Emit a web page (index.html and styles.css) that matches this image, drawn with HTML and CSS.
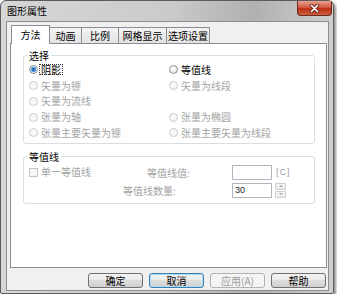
FILE: index.html
```html
<!DOCTYPE html>
<html lang="zh-CN">
<head>
    <meta charset="UTF-8">
    <title>图形属性</title>
    <link rel="stylesheet" href="styles.css">
</head>
<body>
    <div class="window">
        <div class="titlebar">
            <span class="title">图形属性</span>
            <div class="close">
                <svg width="11" height="9" viewBox="0 0 11 9">
                    <path d="M2.5 1.5 L8.5 7.5 M8.5 1.5 L2.5 7.5" stroke="#6a2a1c" stroke-width="3.4" stroke-linecap="round"/>
                    <path d="M2.5 1.5 L8.5 7.5 M8.5 1.5 L2.5 7.5" stroke="#fff" stroke-width="1.7" stroke-linecap="round"/>
                </svg>
            </div>
        </div>

        <div class="client">
            <div class="tabs">
                <div class="tab active w-method">方法</div>
                <div class="tab w-anim">动画</div>
                <div class="tab w-scale">比例</div>
                <div class="tab w-grid">网格显示</div>
                <div class="tab w-opts">选项设置</div>
            </div>

            <div class="panel">
                <fieldset class="group group-select">
                    <legend>选择</legend>
                    <div class="options">
                        <label class="opt on"><span class="radio checked"></span><span class="focus">阴影</span></label>
                        <label class="opt on"><span class="radio"></span>等值线</label>
                        <label class="opt"><span class="radio"></span>矢量为镖</label>
                        <label class="opt"><span class="radio"></span>矢量为线段</label>
                        <label class="opt"><span class="radio"></span>矢量为流线</label>
                        <span></span>
                        <label class="opt"><span class="radio"></span>张量为轴</label>
                        <label class="opt"><span class="radio"></span>张量为椭圆</label>
                        <label class="opt"><span class="radio"></span>张量主要矢量为镖</label>
                        <label class="opt"><span class="radio"></span>张量主要矢量为线段</label>
                    </div>
                </fieldset>

                <fieldset class="group group-contour">
                    <legend>等值线</legend>
                    <div class="row">
                        <label class="opt check-cell"><span class="checkbox"></span>单一等值线</label>
                        <span class="field-label lbl-value">等值线值:</span>
                        <span class="textbox"></span>
                        <span class="unit">[C]</span>
                    </div>
                    <div class="row">
                        <span class="field-label lbl-count">等值线数量:</span>
                        <span class="textbox">30</span>
                        <span class="spin">
                            <span class="spin-btn"><span class="arrow up"></span></span>
                            <span class="spin-btn"><span class="arrow down"></span></span>
                        </span>
                    </div>
                </fieldset>
            </div>

            <div class="buttons">
                <div class="btn">确定</div>
                <div class="btn default">取消</div>
                <div class="btn disabled">应用(A)</div>
                <div class="btn">帮助</div>
            </div>
        </div>
    </div>
</body>
</html>
```

FILE: styles.css
```css
body {
    margin: 0;
    background: #fff;
    font-family: "Noto Sans CJK SC", "Liberation Sans", sans-serif;
    font-size: 10px;
    color: #000;
}

.window {
    box-sizing: border-box;
    width: 334px;
    height: 294px;
    border: 1px solid #5b5b5b;
    border-radius: 6px 6px 2px 2px;
    padding: 0 4px 2px 5px;
    background: linear-gradient(90deg, #d6d6d6, #cbcbcb 50%, #b0b0b0 76%, #c4c4c4 92%, #cfcfcf);
    box-shadow: 2px 2px 3px rgba(0, 0, 0, 0.45);
    display: flex;
    flex-direction: column;
}

/* title bar */
.titlebar {
    height: 20px;
    flex: none;
    display: flex;
    justify-content: space-between;
    align-items: flex-start;
}
.title { line-height: 20px; padding-left: 1px; }
.close {
    box-sizing: border-box;
    width: 35px;
    height: 15px;
    margin-right: -3px;
    border: 1px solid #6d2a1d;
    border-top: none;
    border-radius: 0 0 4px 4px;
    background: linear-gradient(#e6a290, #d25a42 45%, #bb2f15 55%, #cc5e42);
    display: flex;
    align-items: center;
    justify-content: center;
}

.client {
    flex: 1;
    display: flex;
    flex-direction: column;
    background: #f0f0f0;
    border: 1px solid #8d8d8d;
    padding: 0 1px 2px 3px;
}

/* tabs */
.tabs {
    height: 21px;
    flex: none;
    display: flex;
    align-items: flex-end;
    padding-left: 1px;
}
.tab {
    box-sizing: border-box;
    height: 16px;
    line-height: 15px;
    border: 1px solid #898c95;
    border-bottom: none;
    margin-left: -1px;
    background: linear-gradient(#f4f4f4, #e2e2e2);
    text-align: center;
}
.tab.active {
    height: 19px;
    line-height: 17px;
    margin-left: 0;
    margin-bottom: -1px;
    background: #fff;
    position: relative;
    z-index: 1;
}
.w-method { width: 39px; }
.w-anim { width: 33px; }
.w-scale { width: 38px; }
.w-grid { width: 49px; }
.w-opts { width: 44px; }

.panel {
    flex: 1;
    background: #fff;
    border: 1px solid #898c95;
    padding: 6px 11px 0 12px;
    display: flex;
    flex-direction: column;
}

/* group boxes */
.group {
    margin: 0;
    min-width: 0;
    padding: 1px 5px 2px;
    border: 1px solid #d5dfe5;
    border-radius: 3px;
}
.group legend {
    padding: 0 2px;
    margin-left: -2px;
    line-height: 11px;
}
.group-contour {
    margin-top: 7px;
    padding: 3px 5px 5px;
}

.options {
    display: grid;
    grid-template-columns: 140px 1fr;
    grid-auto-rows: 15.75px;
}
.opt {
    display: flex;
    align-items: center;
    gap: 3px;
    line-height: 12px;
    white-space: nowrap;
    color: #a3a3a3;
}
.opt.on { color: #000; }

.radio {
    box-sizing: border-box;
    width: 9px;
    height: 9px;
    flex: none;
    border-radius: 50%;
    border: 1px solid #cacaca;
    background: #f7f7f7;
}
.on .radio {
    border-color: #8e8f8f;
    background: radial-gradient(circle at 40% 35%, #fff, #d9d9d9);
}
.on .radio.checked {
    background: radial-gradient(circle, #1a5ca6 0, #2f7fcf 1.6px, #86bbe6 2.6px, #eef3f8 3.2px);
}
.focus {
    border: 1px dotted #333;
    line-height: 9px;
    padding: 0 1px;
    margin-left: -2px;
}

.checkbox {
    box-sizing: border-box;
    width: 9px;
    height: 9px;
    flex: none;
    border: 1px solid #c5c5c5;
    background: #f7f7f7;
}

.row {
    display: flex;
    align-items: center;
    height: 15px;
}
.row + .row { margin-top: 3px; }
.check-cell { width: 118px; }
.field-label { color: #a3a3a3; white-space: nowrap; }
.lbl-value { width: 85px; }
.lbl-count { width: 109px; margin-left: 94px; }

.textbox {
    box-sizing: border-box;
    width: 40px;
    height: 15px;
    border: 1px solid #b3b7bd;
    background: #fff;
    padding-left: 2px;
    font-family: "Liberation Sans", sans-serif;
    font-size: 9px;
    line-height: 13px;
    color: #222;
}
.unit {
    margin-left: 4px;
    font-family: "Liberation Sans", sans-serif;
    font-size: 9px;
    letter-spacing: 1px;
    color: #a3a3a3;
}

.spin {
    margin-left: 3px;
    width: 11px;
    height: 15px;
    display: flex;
    flex-direction: column;
    gap: 1px;
}
.spin-btn {
    flex: 1;
    border: 1px solid #cfcfcf;
    border-radius: 1px;
    background: linear-gradient(#f8f8f8, #ebebeb);
    display: flex;
    align-items: center;
    justify-content: center;
}
.arrow {
    width: 0;
    height: 0;
    border-left: 2px solid transparent;
    border-right: 2px solid transparent;
}
.arrow.up { border-bottom: 2px solid #a9a9a9; }
.arrow.down { border-top: 2px solid #a9a9a9; }

/* dialog buttons */
.buttons {
    flex: none;
    display: flex;
    justify-content: flex-end;
    gap: 6px;
    margin-top: 5px;
    padding-right: 1px;
}
.btn {
    box-sizing: border-box;
    width: 55px;
    height: 15px;
    border: 1px solid #707070;
    border-radius: 3px;
    background: linear-gradient(#f2f2f2, #ebebeb 45%, #dddddd 50%, #cfcfcf);
    text-align: center;
    line-height: 13px;
}
.btn.default {
    border-color: #3c7fb1;
    box-shadow: inset 0 0 0 1px #a6dcf7;
}
.btn.disabled {
    border-color: #adb2b5;
    background: #f4f4f4;
    color: #9a9a9a;
}
```
